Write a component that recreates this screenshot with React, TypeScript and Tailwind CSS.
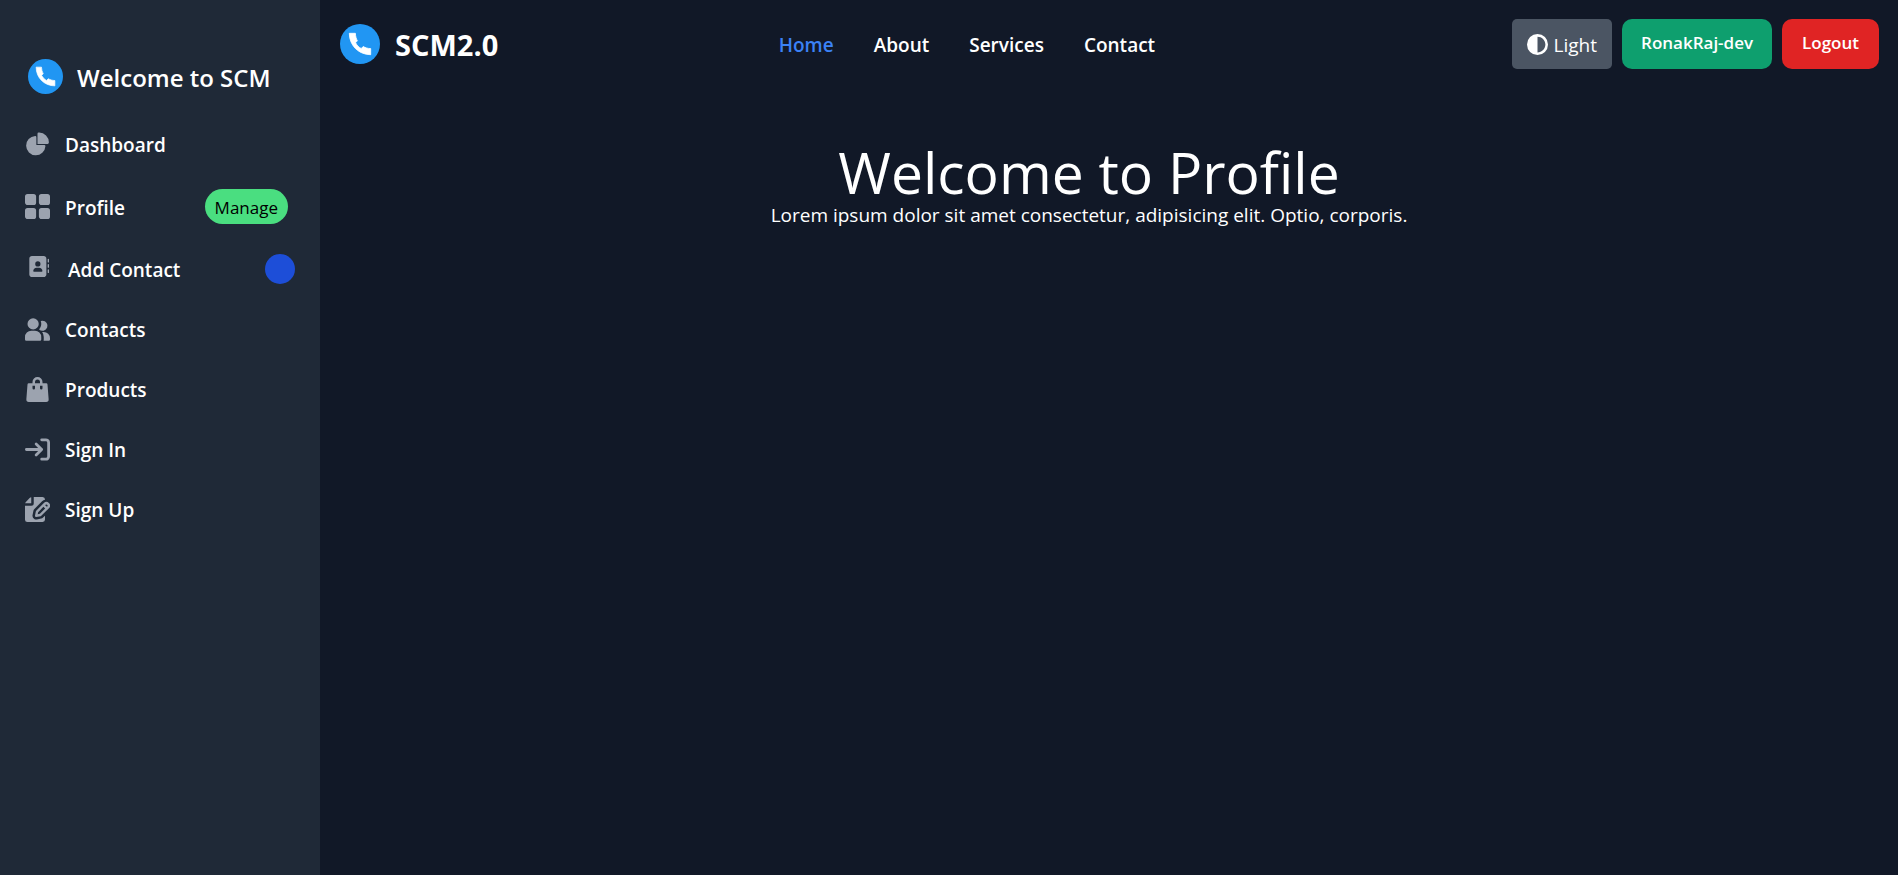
import type { ReactNode } from "react";
import { FaAddressBook, FaCircleHalfStroke } from "react-icons/fa6";

function PhoneLogo({ className }: { className: string }) {
  return (
    <svg className={className} viewBox="0 0 40 40" aria-hidden="true">
      <circle cx="20" cy="20" r="20" fill="#2196f3" />
      <path
        fill="#fff"
        stroke="#fff"
        strokeLinejoin="round"
        strokeWidth=".8"
        d="M9.3 9.3H15.4C15.5 12.2 16.2 14.8 17.4 16.8L15.6 18.7C16.8 21.2 18.8 23.3 21.2 24.5L23.2 22.5C25.3 23.8 27.8 24.5 30.7 24.6V30.7C18.6 30.7 9.3 21.4 9.3 9.3Z"
      />
    </svg>
  );
}

const iconClass = "size-[25px] shrink-0 text-[#9ca3af]";

function Icon({ viewBox, paths }: { viewBox: string; paths: string[] }) {
  return (
    <svg className={iconClass} viewBox={viewBox} fill="currentColor" aria-hidden="true">
      {paths.map((d) => (
        <path key={d} d={d} />
      ))}
    </svg>
  );
}

function SideLink({ icon, label, children }: { icon: ReactNode; label: string; children?: ReactNode }) {
  return (
    <li>
      <a href="#" className="flex items-center rounded-lg p-[10px] hover:bg-gray-700">
        {icon}
        <span className="ml-[15px] flex-1 pt-[2px] leading-[28px] whitespace-nowrap">{label}</span>
        {children}
      </a>
    </li>
  );
}

function Sidebar() {
  return (
    <aside className="w-80 shrink-0 bg-[#1f2937] px-[15px] pt-[54px]">
      <a href="#" className="mb-[20px] flex h-[45px] items-center pl-[13px]">
        <PhoneLogo className="size-[35px]" />
        <span className="ml-[14px] pt-[2px] text-[24px] font-semibold">Welcome to SCM</span>
      </a>
      <ul className="flex flex-col gap-[10px] text-[19px] font-semibold">
        <SideLink
          label="Dashboard"
          icon={
            <Icon
              viewBox="0 0 22 21"
              paths={[
                "M16.975 11H10V4.025a1 1 0 0 0-1.066-.998 8.5 8.5 0 1 0 9.039 9.039.999.999 0 0 0-1-1.066h.002Z",
                "M12.5 0c-.157 0-.311.01-.565.027A1 1 0 0 0 11 1.02V10h8.975a1 1 0 0 0 1-.935c.013-.188.028-.374.028-.565A8.51 8.51 0 0 0 12.5 0Z",
              ]}
            />
          }
        />
        <SideLink
          label="Profile"
          icon={
            <Icon
              viewBox="0 0 18 18"
              paths={[
                "M6.143 0H1.857A1.857 1.857 0 0 0 0 1.857v4.286C0 7.169.831 8 1.857 8h4.286A1.857 1.857 0 0 0 8 6.143V1.857A1.857 1.857 0 0 0 6.143 0Zm10 0h-4.286A1.857 1.857 0 0 0 10 1.857v4.286C10 7.169 10.831 8 11.857 8h4.286A1.857 1.857 0 0 0 18 6.143V1.857A1.857 1.857 0 0 0 16.143 0Zm-10 10H1.857A1.857 1.857 0 0 0 0 11.857v4.286C0 17.169.831 18 1.857 18h4.286A1.857 1.857 0 0 0 8 16.143v-4.286A1.857 1.857 0 0 0 6.143 10Zm10 0h-4.286A1.857 1.857 0 0 0 10 11.857v4.286c0 1.026.831 1.857 1.857 1.857h4.286A1.857 1.857 0 0 0 18 16.143v-4.286A1.857 1.857 0 0 0 16.143 10Z",
              ]}
            />
          }
        >
          <span className="mr-[7px] flex h-[35px] items-center rounded-full bg-[#4ade80] px-[10px] pt-[2px] text-[17px] font-medium text-black">
            Manage
          </span>
        </SideLink>
        <SideLink
          label="Add Contact"
          icon={<FaAddressBook className="mr-[4px] mb-[5px] ml-[3px] size-[21px] shrink-0 text-[#9ca3af]" />}
        >
          <span className="size-[30px] rounded-full bg-[#1d4ed8]" />
        </SideLink>
        <SideLink
          label="Contacts"
          icon={
            <Icon
              viewBox="0 0 20 18"
              paths={[
                "M14 2a3.963 3.963 0 0 0-1.4.267 6.439 6.439 0 0 1-1.331 6.638A4 4 0 1 0 14 2Zm1 9h-1.264A6.957 6.957 0 0 1 15 15v2a2.97 2.97 0 0 1-.184 1H19a1 1 0 0 0 1-1v-1a5.006 5.006 0 0 0-5-5ZM6.5 9a4.5 4.5 0 1 0 0-9 4.5 4.5 0 0 0 0 9ZM8 10H5a5.006 5.006 0 0 0-5 5v2a1 1 0 0 0 1 1h11a1 1 0 0 0 1-1v-2a5.006 5.006 0 0 0-5-5Z",
              ]}
            />
          }
        />
        <SideLink
          label="Products"
          icon={
            <Icon
              viewBox="0 0 18 20"
              paths={[
                "M17 5.923A1 1 0 0 0 16 5h-3V4a4 4 0 1 0-8 0v1H2a1 1 0 0 0-1 .923L.086 17.846A2 2 0 0 0 2.08 20h13.84a2 2 0 0 0 1.994-2.153L17 5.923ZM7 9a1 1 0 0 1-2 0V7h2v2Zm0-5a2 2 0 1 1 4 0v1H7V4Zm6 5a1 1 0 1 1-2 0V7h2v2Z",
              ]}
            />
          }
        />
        <SideLink
          label="Sign In"
          icon={
            <svg className={iconClass} viewBox="0 0 18 16" fill="none" aria-hidden="true">
              <path
                stroke="currentColor"
                strokeLinecap="round"
                strokeLinejoin="round"
                strokeWidth="2"
                d="M1 8h11m0 0L8 4m4 4-4 4m4-11h3a2 2 0 0 1 2 2v10a2 2 0 0 1-2 2h-3"
              />
            </svg>
          }
        />
        <SideLink
          label="Sign Up"
          icon={
            <Icon
              viewBox="0 0 20 20"
              paths={[
                "M5 5V.13a2.96 2.96 0 0 0-1.293.749L.879 3.707A2.96 2.96 0 0 0 .13 5H5Z",
                "M6.737 11.061a2.961 2.961 0 0 1 .81-1.515l6.117-6.116A4.839 4.839 0 0 1 16 2.141V2a1.97 1.97 0 0 0-1.933-2H7v5a2 2 0 0 1-2 2H0v11a1.969 1.969 0 0 0 1.933 2h12.134A1.97 1.97 0 0 0 16 18v-3.093l-1.546 1.546c-.413.413-.94.695-1.513.81l-3.4.679a2.947 2.947 0 0 1-1.85-.227 2.96 2.96 0 0 1-1.635-3.257l.681-3.397Z",
                "M8.961 16a.93.93 0 0 0 .189-.019l3.4-.679a.961.961 0 0 0 .49-.263l6.118-6.117a2.884 2.884 0 0 0-4.079-4.078l-6.117 6.117a.96.96 0 0 0-.263.491l-.679 3.4A.961.961 0 0 0 8.961 16Zm7.477-9.8a.958.958 0 0 1 .68-.281.961.961 0 0 1 .682 1.644l-.315.315-1.36-1.36.313-.318Zm-5.911 5.911 4.236-4.236 1.359 1.359-4.236 4.237-1.7.339.341-1.699Z",
              ]}
            />
          }
        />
      </ul>
    </aside>
  );
}

const links = ["Home", "About", "Services", "Contact"];

function Navbar() {
  return (
    <nav className="flex items-start justify-between pt-[19px] pr-[19px] pl-5">
      <a href="#" className="flex h-[50px] items-center gap-[15px]">
        <PhoneLogo className="size-10" />
        <span className="pt-[2px] text-[29px] font-bold">SCM2.0</span>
      </a>
      <ul className="mr-[76px] flex h-[50px] items-center gap-10 pt-[2px] text-[19px] font-semibold">
        {links.map((link) => (
          <li key={link}>
            <a href="#" className={link === "Home" ? "text-[#3b82f6]" : "text-white"}>
              {link}
            </a>
          </li>
        ))}
      </ul>
      <div className="flex gap-[10px]">
        <button type="button" className="flex h-[50px] items-center gap-[6px] rounded-[5px] bg-[#4b5563] px-[15px] text-[19px]">
          <FaCircleHalfStroke className="size-[21px]" />
          <span className="pt-[2px]">Light</span>
        </button>
        <a href="#" className="flex h-[50px] rounded-[10px] bg-[#0e9f6e] px-[19px] pt-[11px] text-[17px] leading-[26px] font-semibold">
          RonakRaj-dev
        </a>
        <a href="#" className="flex h-[50px] rounded-[10px] bg-[#e02424] px-5 pt-[11px] text-[17px] leading-[26px] font-semibold">
          Logout
        </a>
      </div>
    </nav>
  );
}

export default function App() {
  return (
    <div className="flex min-h-screen bg-[#111827] font-['Open_Sans','Noto_Sans',sans-serif] text-white">
      <Sidebar />
      <div className="min-w-0 flex-1">
        <Navbar />
        <main className="pt-[75px] pr-10 text-center">
          <h1 className="text-[57px] leading-[56px]">Welcome to Profile</h1>
          <p className="text-[19px] leading-[30px]">
            Lorem ipsum dolor sit amet consectetur, adipisicing elit. Optio, corporis.
          </p>
        </main>
      </div>
    </div>
  );
}
